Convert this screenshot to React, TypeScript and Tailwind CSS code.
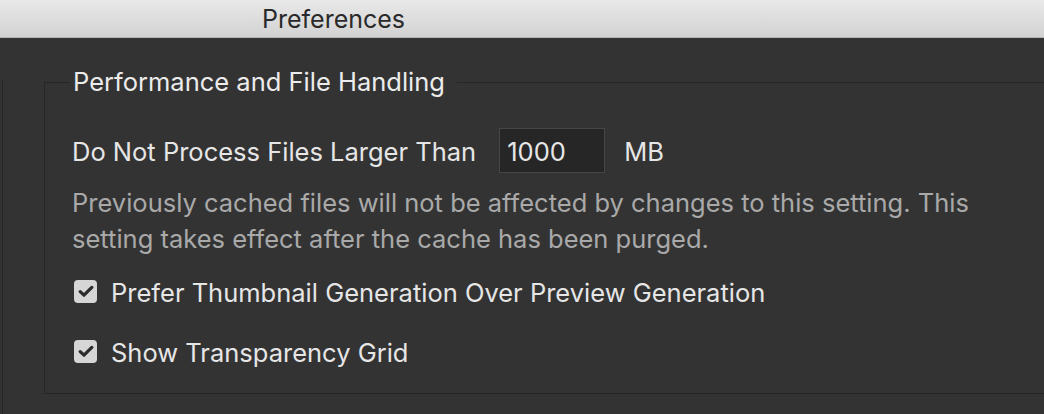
import React from "react";

function Check() {
  return (
    <span className="flex h-[23px] w-[23px] shrink-0 items-center justify-center rounded-[4px] bg-[#d6d6d6]">
      <svg width="16" height="13" viewBox="0 0 16 13" fill="none">
        <path d="M2.2 6.6 L6 10.2 L13.8 2.4" stroke="#2c2c2c" strokeWidth="3.2" strokeLinecap="round" strokeLinejoin="round" />
      </svg>
    </span>
  );
}

export default function App() {
  return (
    <div
      className="flex h-[414px] w-[1044px] flex-col overflow-hidden bg-[#333333] text-[#e6e6e6]"
      style={{ fontFamily: "Inter, 'Noto Sans', sans-serif" }}
    >
      <div className="flex h-[38px] shrink-0 items-center border-b border-[#b4b4b4] bg-gradient-to-b from-[#e9e9e9] to-[#d2d2d2] pl-[262px]">
        <span className="text-[25px] leading-[30px] text-[#2a2a2a]">Preferences</span>
      </div>
      <div className="flex flex-1 items-start">
        <div className="mt-[42px] h-[400px] w-[3px] shrink-0 border-r border-[#262626]" />
        <fieldset className="ml-[41px] mt-[30px] w-[1100px] shrink-0 border border-[#262626] pb-[30px] pl-[25px]">
          <legend className="pl-[3px] pr-[12px] text-[25.5px] leading-[28px] text-[#ececec]">
            Performance and File Handling
          </legend>
          <div className="mt-[32px] flex h-[45px] items-center pl-[2px]">
            <span className="pt-[4px] text-[25.5px]">Do Not Process Files Larger Than</span>
            <div className="ml-[23px] flex h-[45px] w-[106px] items-center border border-[#464646] bg-[#262626] pl-[7px] pt-[4px] text-[25.5px]">
              1000
            </div>
            <span className="ml-[19px] pt-[4px] text-[25.5px]">MB</span>
          </div>
          <p className="mt-[12px] pl-[2px] text-[25.5px] leading-[36px] text-[#a9a9a9]">
            Previously cached files will not be affected by changes to this setting. This
            <br />
            setting takes effect after the cache has been purged.
          </p>
          <div className="mt-[23px] flex h-[23px] items-center gap-[14px] pl-[4px]">
            <Check />
            <span className="pt-[4px] text-[25.5px]">Prefer Thumbnail Generation Over Preview Generation</span>
          </div>
          <div className="mt-[37px] flex h-[23px] items-center gap-[14px] pl-[4px]">
            <Check />
            <span className="pt-[4px] text-[25.5px]">Show Transparency Grid</span>
          </div>
        </fieldset>
      </div>
    </div>
  );
}
